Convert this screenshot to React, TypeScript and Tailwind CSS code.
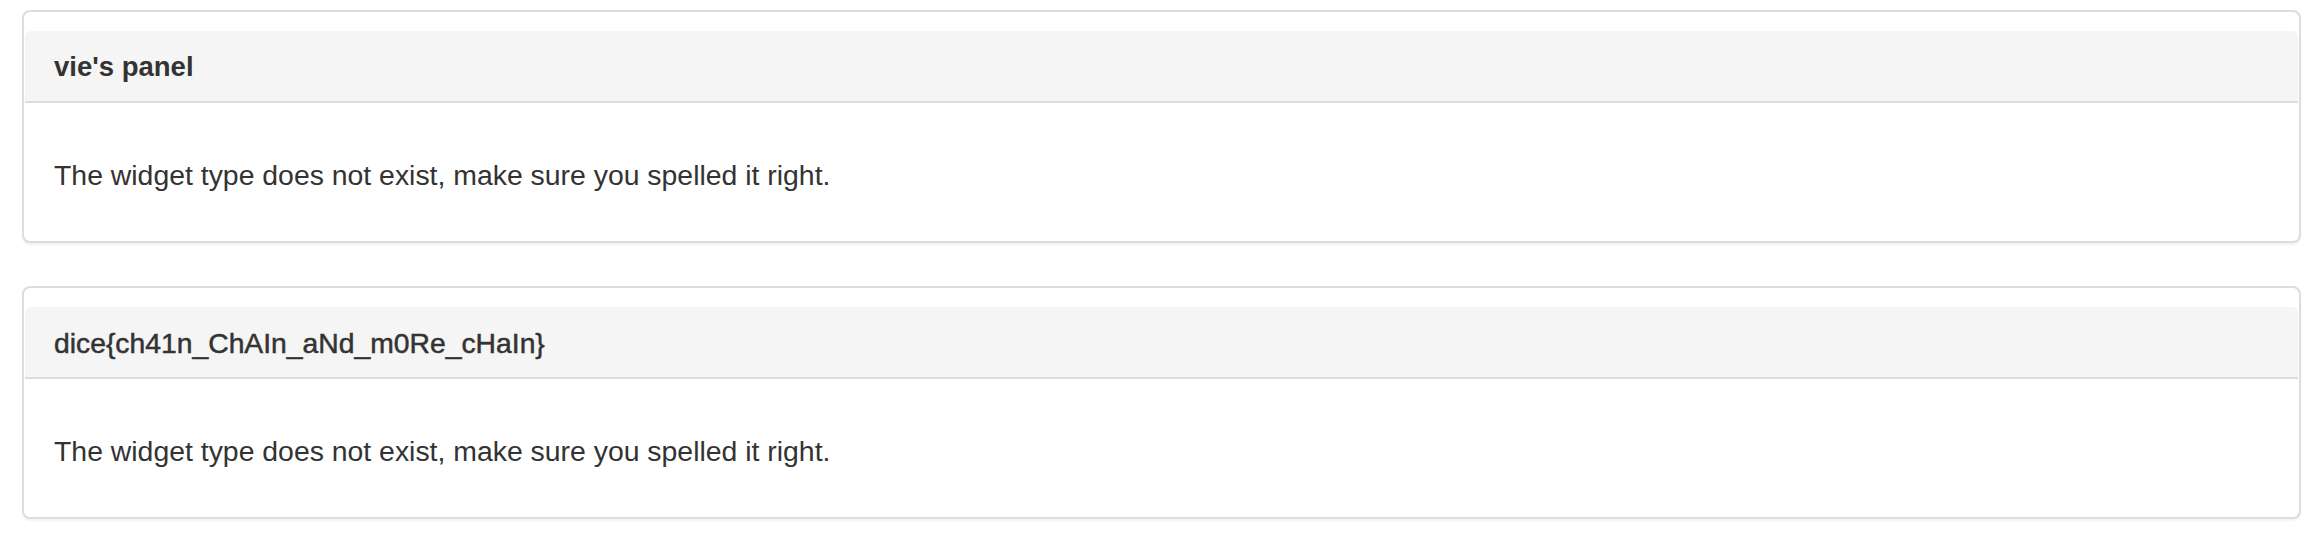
import React from "react";

const font = "font-['Helvetica_Neue','Liberation_Sans',Arial,sans-serif]";

function Panel({ title, bold }: { title: string; bold: boolean }) {
  return (
    <div className="ml-[22px] mr-[17px] rounded-[8px] border-2 border-[#dddddd] bg-white pt-[19px] shadow-[0_2px_2px_rgba(0,0,0,0.05)]">
      <div className="mx-px rounded-t-[6px] border-b-2 border-[#dddddd] bg-[#f5f5f5] px-[29px] pt-[16px] pb-[14px]">
        <div
          className={
            bold
              ? "text-[27.5px] leading-[40px] font-bold text-[#333333]"
              : "text-[28.3px] leading-[40px] font-normal text-[#333333] [-webkit-text-stroke:0.5px_#333333]"
          }
        >
          {title}
        </div>
      </div>
      <div className="px-[30px] pt-[52px] pb-[46px] text-[28.4px] leading-[40px] text-[#333333]">
        The widget type does not exist, make sure you spelled it right.
      </div>
    </div>
  );
}

export default function App() {
  return (
    <div className={`${font} min-h-[538px] w-full bg-white pt-[10px]`}>
      <div className="flex flex-col gap-[43px]">
        <Panel title="vie's panel" bold={true} />
        <Panel title="dice{ch41n_ChAIn_aNd_m0Re_cHaIn}" bold={false} />
      </div>
    </div>
  );
}
